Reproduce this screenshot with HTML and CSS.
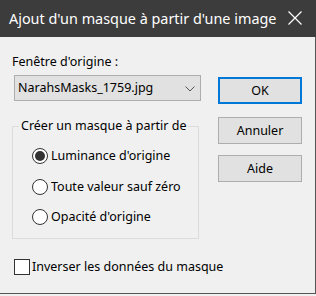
FILE: index.html
```html
<!DOCTYPE html>
<html lang="fr">
<head>
    <meta charset="UTF-8">
    <meta name="viewport" content="width=device-width, initial-scale=1.0">
    <title>Ajout d'un masque à partir d'une image</title>
    <link rel="stylesheet" href="styles.css">
</head>
<body>

    <div class="dialog">
        <div class="titlebar">
            <span class="title">Ajout d'un masque à partir d'une image</span>
            <span class="close">
                <svg width="14" height="14" viewBox="0 0 14 14"><path d="M0.5 0.5 L13.5 13.5 M13.5 0.5 L0.5 13.5" stroke="#ffffff" stroke-width="1.2" fill="none"/></svg>
            </span>
        </div>

        <div class="content">
            <div class="left-col">
                <div class="field-label">Fenêtre d'origine :</div>
                <div class="select">
                    <span class="select-text">NarahsMasks_1759.jpg</span>
                    <svg class="chevron" width="10" height="6" viewBox="0 0 10 6"><path d="M0.5 0.5 L5 5 L9.5 0.5" stroke="#555" stroke-width="1" fill="none"/></svg>
                </div>

                <fieldset class="group">
                    <legend>Créer un masque à partir de</legend>
                    <div class="options">
                        <div class="radio-row">
                            <span class="radio checked"></span>
                            <span>Luminance d'origine</span>
                        </div>
                        <div class="radio-row">
                            <span class="radio"></span>
                            <span>Toute valeur sauf zéro</span>
                        </div>
                        <div class="radio-row">
                            <span class="radio"></span>
                            <span>Opacité d'origine</span>
                        </div>
                    </div>
                </fieldset>

                <div class="check-row">
                    <span class="checkbox"></span>
                    <span>Inverser les données du masque</span>
                </div>
            </div>

            <div class="right-col">
                <div class="btn default">OK</div>
                <div class="btn btn-cancel">Annuler</div>
                <div class="btn btn-help">Aide</div>
            </div>
        </div>
    </div>

</body>
</html>
```

FILE: styles.css
```css
*{
    margin: 0;
    padding: 0;
    box-sizing: border-box;
}

body{
    background: #f0f0f0;
    font-family: "Noto Sans", "Open Sans", sans-serif;
    font-size: 12.5px;
    line-height: 20px;
    color: #000000;
    white-space: nowrap;
}

.dialog{
    width: 316px;
    height: 294px;
    background: #f0f0f0;
    border-right: 1px solid #555555;
    border-bottom: 1px solid #555555;
}

.titlebar{
    height: 37px;
    background: #3c3c3c;
    display: flex;
    align-items: center;
    justify-content: space-between;
    padding: 0 14px 0 9px;
    margin-right: -1px;
}

.titlebar .title{
    color: #ffffff;
    font-size: 14.4px;
    line-height: 20px;
}

.titlebar .close{
    display: flex;
    flex-shrink: 0;
    width: 14px;
    height: 14px;
    margin-top: -1px;
}

.content{
    display: flex;
    padding-left: 12px;
}

.left-col{
    width: 188px;
}

.field-label{
    margin-top: 15px;
}

.select{
    margin: 3px 0 0 2px;
    width: 187px;
    height: 26px;
    background: #e1e1e1;
    border: 1px solid #adadad;
    display: flex;
    align-items: center;
    justify-content: space-between;
    padding: 0 5px 0 3px;
}

.select .chevron{
    margin-top: 1px;
}

.group{
    margin-top: 15px;
    width: 187px;
    height: 123px;
    border: 1px solid #dcdcdc;
    padding: 5px 0 0 6px;
}

.group legend{
    padding: 0 2px;
}

.options{
    margin-left: 13px;
}

.radio-row{
    display: flex;
    align-items: center;
    gap: 3px;
    height: 30px;
}

.radio-row + .radio-row{
    margin-top: 0.5px;
}

.radio{
    flex-shrink: 0;
    width: 16px;
    height: 16px;
    border: 1px solid #333333;
    border-radius: 50%;
    background: #ffffff;
    display: flex;
    align-items: center;
    justify-content: center;
}

.radio.checked::after{
    content: "";
    width: 10px;
    height: 10px;
    border-radius: 50%;
    background: #333333;
}

.check-row{
    display: flex;
    align-items: center;
    gap: 2px;
    margin: 18px 0 0 2px;
}

.checkbox{
    flex-shrink: 0;
    width: 16px;
    height: 16px;
    border: 1px solid #333333;
    background: #ffffff;
}

.right-col{
    margin-left: 18px;
    padding-top: 40px;
}

.btn{
    width: 84px;
    height: 27px;
    background: #e1e1e1;
    border: 1px solid #adadad;
    display: flex;
    align-items: center;
    justify-content: center;
}

.btn.default{
    border: 2px solid #0078d7;
}

.btn-cancel{
    margin-top: 13px;
}

.btn-help{
    margin-top: 11px;
}
```
